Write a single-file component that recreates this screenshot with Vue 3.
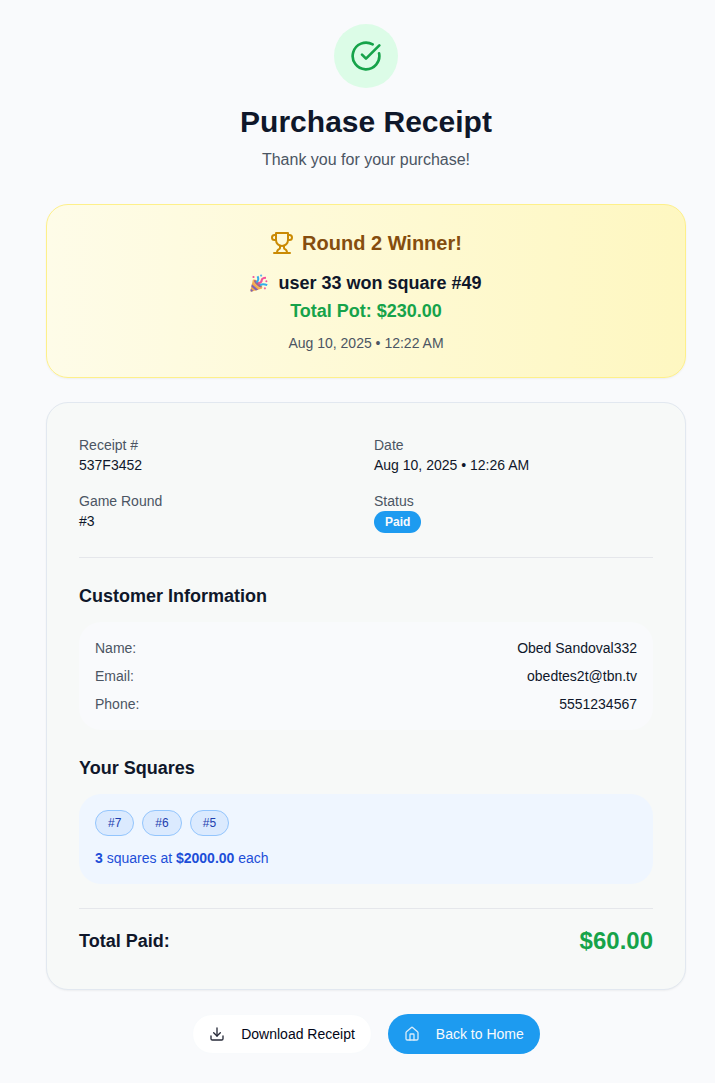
<script setup>
const squares = [7, 6, 5]
const customer = [
  { label: 'Name:', value: 'Obed Sandoval332' },
  { label: 'Email:', value: 'obedtes2t@tbn.tv' },
  { label: 'Phone:', value: '5551234567' },
]
</script>

<template>
  <main class="page">
    <header class="intro">
      <div class="success">
        <svg class="icon icon-large" viewBox="0 0 24 24" aria-hidden="true">
          <path d="M21.801 10A10 10 0 1 1 17 3.335" />
          <path d="m9 11 3 3L22 4" />
        </svg>
      </div>
      <h1>Purchase Receipt</h1>
      <p>Thank you for your purchase!</p>
    </header>

    <section class="winner">
      <h2>
        <svg class="icon icon-medium trophy" viewBox="0 0 24 24" aria-hidden="true">
          <path d="M6 9H4.5a2.5 2.5 0 0 1 0-5H6" />
          <path d="M18 9h1.5a2.5 2.5 0 0 0 0-5H18" />
          <path d="M4 22h16" />
          <path d="M10 14.66V17c0 .55-.47.98-.97 1.21C7.85 18.75 7 20.24 7 22" />
          <path d="M14 14.66V17c0 .55.47.98.97 1.21C16.15 18.75 17 20.24 17 22" />
          <path d="M18 2H6v7a6 6 0 0 0 12 0V2Z" />
        </svg>
        Round 2 Winner!
      </h2>
      <p class="winner-name">
        <svg class="party" viewBox="0 0 18 18" aria-hidden="true">
          <path d="M3 5.6 12.2 14.4 1.8 17.6Q.3 17.9.5 16.3Z" fill="#f3a94b" />
          <path d="M1.9 10.2 8.2 15.7 5.8 16.4 1.3 12.5Z" fill="#7d62b5" />
          <path d="M.9 14.8 3.4 17.1 1.8 17.6Q.3 17.9.5 16.3Z" fill="#7d62b5" />
          <ellipse cx="7.6" cy="10" rx="6.1" ry="2.3" transform="rotate(43 7.6 10)" fill="#f6b85c" />
          <ellipse cx="7.8" cy="9.8" rx="5" ry="1.5" transform="rotate(43 7.8 9.8)" fill="#a0648f" />
          <path d="M6.4 8.4Q9.4 6 7.6 2.2" fill="none" stroke="#35aeea" stroke-width="2" />
          <path d="M8.4 9.4Q11.8 8.8 11.8 5.8Q12 3.9 16 3.7" fill="none" stroke="#f2549a" stroke-width="2.1" />
          <path d="M9.9 11.2Q13 9.2 17.2 11.2" fill="none" stroke="#35aeea" stroke-width="2" />
          <circle cx="3.5" cy="3" r="1.1" fill="#f2549a" />
          <circle cx="11.1" cy="1.6" r="1.1" fill="#5bb8e9" />
          <circle cx="16.4" cy="7.2" r="1" fill="#f2549a" />
          <circle cx="14.9" cy="14.3" r="1.1" fill="#f36aa0" />
        </svg>
        user 33 won square #49
      </p>
      <p class="pot">Total Pot: $230.00</p>
      <p class="winner-date">Aug 10, 2025 • 12:22 AM</p>
    </section>

    <section class="card">
      <dl class="details">
        <div><dt>Receipt #</dt><dd>537F3452</dd></div>
        <div><dt>Date</dt><dd>Aug 10, 2025 • 12:26 AM</dd></div>
        <div><dt>Game Round</dt><dd>#3</dd></div>
        <div><dt>Status</dt><dd class="badge">Paid</dd></div>
      </dl>

      <hr>

      <section class="group">
        <h3>Customer Information</h3>
        <dl class="panel customer">
          <div v-for="row in customer" :key="row.label">
            <dt>{{ row.label }}</dt>
            <dd>{{ row.value }}</dd>
          </div>
        </dl>
      </section>

      <section class="group">
        <h3>Your Squares</h3>
        <div class="panel squares">
          <ul>
            <li v-for="square in squares" :key="square">#{{ square }}</li>
          </ul>
          <p><strong>3</strong> squares at <strong>$2000.00</strong> each</p>
        </div>
      </section>

      <hr>

      <div class="total">
        <span>Total Paid:</span>
        <strong>$60.00</strong>
      </div>
    </section>

    <footer class="actions">
      <button type="button" class="download">
        <svg class="icon icon-small" viewBox="0 0 24 24" aria-hidden="true">
          <path d="M21 15v4a2 2 0 0 1-2 2H5a2 2 0 0 1-2-2v-4" />
          <path d="m7 10 5 5 5-5" />
          <path d="M12 15V3" />
        </svg>
        Download Receipt
      </button>
      <a href="#" class="home">
        <svg class="icon icon-small" viewBox="0 0 24 24" aria-hidden="true">
          <path d="M15 21v-8a1 1 0 0 0-1-1h-4a1 1 0 0 0-1 1v8" />
          <path d="M3 10a2 2 0 0 1 .709-1.528l7-5.999a2 2 0 0 1 2.582 0l7 5.999A2 2 0 0 1 21 10v9a2 2 0 0 1-2 2H5a2 2 0 0 1-2-2z" />
        </svg>
        Back to Home
      </a>
    </footer>
  </main>
</template>

<style>
html {
  background: #f9fafc;
}
</style>

<style scoped>
.page {
  display: flex;
  flex-direction: column;
  gap: 24px;
  max-width: 640px;
  margin: 0 auto;
  padding: 24px 29px 24px 46px;
  font-family: "Liberation Sans", Arial, sans-serif;
  font-size: 14px;
  line-height: 20px;
  color: #0f172a;
}
h1, h2, h3, p, dl, dd, ul {
  margin: 0;
  padding: 0;
}
.icon {
  flex: none;
  fill: none;
  stroke: currentColor;
  stroke-width: 2;
  stroke-linecap: round;
  stroke-linejoin: round;
}
.icon-small {
  width: 16px;
  height: 16px;
  opacity: 0.85;
}
.icon-medium {
  width: 24px;
  height: 24px;
}
.icon-large {
  width: 32px;
  height: 32px;
}
.intro {
  display: flex;
  flex-direction: column;
  align-items: center;
  padding-bottom: 8px;
  text-align: center;
}
.success {
  display: grid;
  place-items: center;
  width: 64px;
  height: 64px;
  margin-bottom: 16px;
  border-radius: 50%;
  background: #dcfce7;
  color: #16a34a;
}
h1 {
  margin-bottom: 8px;
  font-size: 30px;
  line-height: 36px;
}
.intro p {
  font-size: 16px;
  line-height: 24px;
  color: #4b5563;
}
.winner {
  padding: 24px;
  border: 1px solid #fef08a;
  border-radius: 22px;
  background: linear-gradient(to right, #fefce8, #fef7c1);
  box-shadow: 0 1px 2px rgb(0 0 0 / 5%);
  text-align: center;
}
.winner h2 {
  display: flex;
  align-items: center;
  justify-content: center;
  gap: 8px;
  margin-bottom: 12px;
  font-size: 20px;
  line-height: 28px;
  color: #854d0e;
}
.trophy {
  color: #ca8a04;
}
.winner-name,
.pot {
  font-size: 18px;
  font-weight: 700;
  line-height: 28px;
}
.winner-name {
  display: flex;
  align-items: center;
  justify-content: center;
  gap: 10px;
}
.party {
  width: 18px;
  height: 18px;
}
.pot {
  color: #16a34a;
}
.winner-date {
  margin-top: 8px;
  color: #4b5563;
}
.card {
  padding: 32px;
  border: 1px solid #e2e8f0;
  border-radius: 22px;
  background: #f7f9f8;
  box-shadow: 0 1px 2px rgb(0 0 0 / 5%);
}
.details {
  display: grid;
  grid-template-columns: 1fr 1fr;
  gap: 16px;
}
dt {
  color: #4b5563;
}
.badge {
  width: fit-content;
  padding: 3px 11px;
  border-radius: 11px;
  background: #1d9bf0;
  color: #f8fafc;
  font-size: 12px;
  font-weight: 700;
  line-height: 16px;
}
hr {
  height: 1px;
  margin: 24px 0 0;
  border: 0;
  background: #e5e7eb;
}
.group {
  margin-top: 24px;
}
h3 {
  margin-bottom: 12px;
  font-size: 18px;
  line-height: 28px;
}
.panel {
  padding: 16px;
  border-radius: 22px;
}
.customer {
  display: grid;
  gap: 8px;
  background: #f9fafc;
}
.customer div,
.total {
  display: flex;
  align-items: center;
  justify-content: space-between;
}
.squares {
  background: #eff6ff;
  color: #1d4ed8;
}
.squares ul {
  display: flex;
  flex-wrap: wrap;
  gap: 8px;
  margin-bottom: 12px;
  list-style: none;
}
.squares li {
  padding: 4px 12px;
  border: 1px solid #93c5fd;
  border-radius: 13px;
  background: #dbeafe;
  color: #1e40af;
  font-size: 12px;
  line-height: 16px;
}
.total {
  margin-top: 16px;
  font-size: 18px;
  font-weight: 700;
  line-height: 32px;
}
.total strong {
  font-size: 24px;
  color: #16a34a;
}
.actions {
  display: flex;
  flex-wrap: wrap;
  justify-content: center;
  gap: 16px;
}
.download,
.home {
  display: flex;
  align-items: center;
  gap: 16px;
  padding: 10px 16px;
  border: 0;
  border-radius: 20px;
  font: inherit;
  text-decoration: none;
  cursor: pointer;
}
.download {
  padding: 9px 16px;
  border: 1px solid #f8fafc;
  background: #fff;
  color: #020617;
}
.home {
  background: #1d9bf0;
  color: #f8fafc;
}
</style>
